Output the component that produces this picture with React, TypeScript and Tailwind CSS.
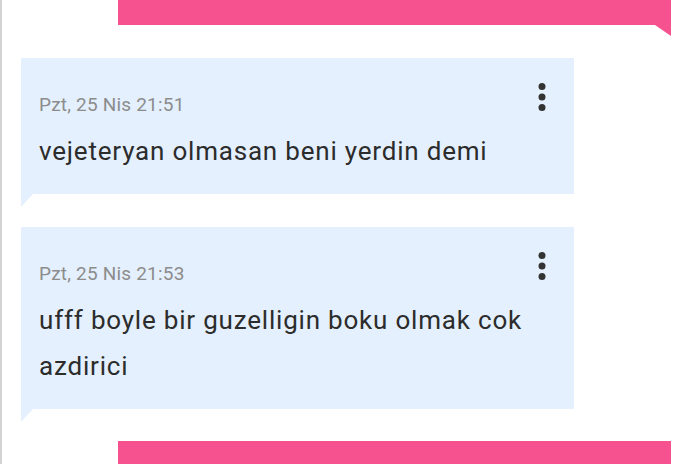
import React from 'react'

type Message = {
  id: number
  date: string
  text: string
}

const messages: Message[] = [
  { id: 1, date: 'Pzt, 25 Nis 21:51', text: 'vejeteryan olmasan beni yerdin demi' },
  { id: 2, date: 'Pzt, 25 Nis 21:53', text: 'ufff boyle bir guzelligin boku olmak cok azdirici' },
]

const MoreIcon: React.FC = () => (
  <svg width="28" height="28" viewBox="0 0 28 28" className="text-[#333333] shrink-0">
    <circle cx="14" cy="3.5" r="3.5" fill="currentColor" />
    <circle cx="14" cy="14" r="3.5" fill="currentColor" />
    <circle cx="14" cy="24.5" r="3.5" fill="currentColor" />
  </svg>
)

const Bubble: React.FC<{ msg: Message }> = ({ msg }) => (
  <div className="relative ml-[19px] w-[553px] bg-[#e4f0fd] flex pl-[18px] pr-[18px] pt-[25px] pb-[20px]">
    <div className="flex-1 min-w-0">
      <div className="mt-[10px] text-[19px] leading-[24px] tracking-[0.2px] text-[#8c8c8c]">{msg.date}</div>
      <p className="mt-[11px] text-[26px] leading-[46px] tracking-[0.8px] text-[#2c2c2c]">{msg.text}</p>
    </div>
    <MoreIcon />
    {/* speech tail */}
    <svg width="12" height="13" viewBox="0 0 12 13" className="absolute left-0 top-full">
      <polygon points="0,0 12,0 0,13" fill="#e4f0fd" />
    </svg>
  </div>
)

const App: React.FC = () => {
  return (
    <div className="w-[690px] h-[464px] overflow-hidden bg-white border-l-2 border-[#d4d4d4] flex flex-col font-['Roboto',sans-serif]">
      {/* outgoing message bar */}
      <div className="relative ml-[116px] w-[553px] h-[25px] bg-[#f6528f] shrink-0">
        <svg width="16" height="11" viewBox="0 0 16 11" className="absolute right-0 top-full">
          <polygon points="0,0 16,0 16,11" fill="#f6528f" />
        </svg>
      </div>

      <div className="mt-[33px] shrink-0">
        <Bubble msg={messages[0]} />
      </div>
      <div className="mt-[33px] shrink-0">
        <Bubble msg={messages[1]} />
      </div>

      <div className="mt-[32px] ml-[116px] w-[553px] h-[40px] bg-[#f6528f] shrink-0" />
    </div>
  )
}

export default App
